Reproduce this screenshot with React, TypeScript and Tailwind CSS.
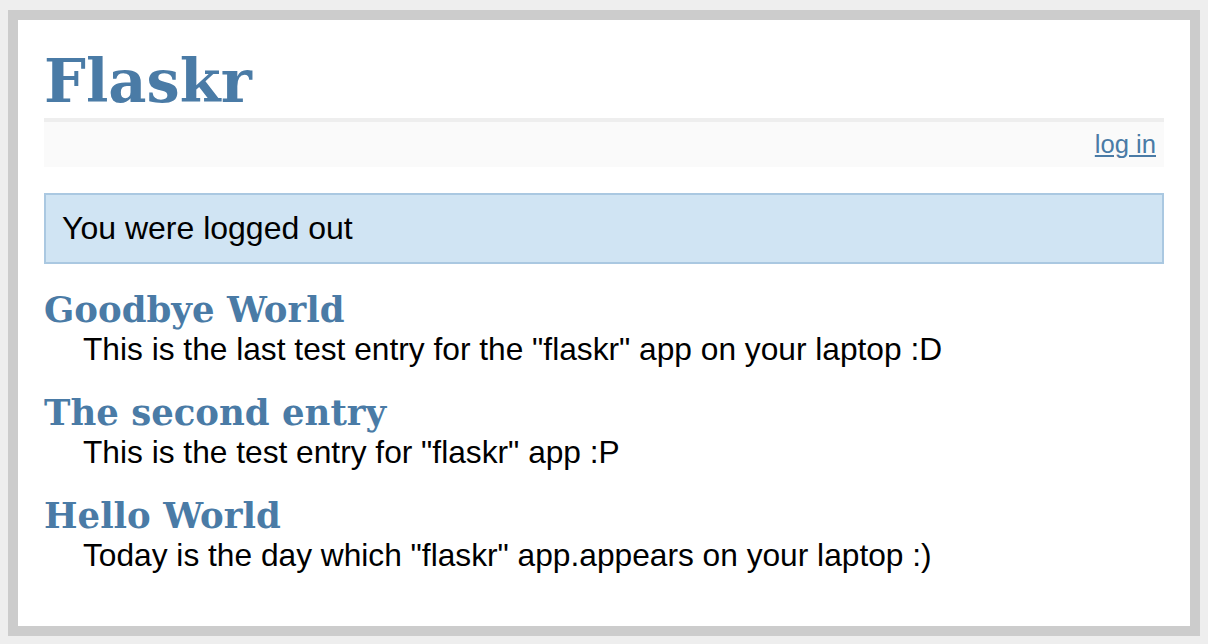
import React from "react";

const entries = [
  { title: "Goodbye World", text: 'This is the last test entry for the "flaskr" app on your laptop :D' },
  { title: "The second entry", text: 'This is the test entry for "flaskr" app :P' },
  { title: "Hello World", text: 'Today is the day which "flaskr" app.appears on your laptop :)' },
];

export default function App() {
  return (
    <div className="w-[1208px] h-[644px] bg-[#eeeeee] pt-[10px] px-[8px] pb-[8px] font-['Liberation_Sans',Arial,sans-serif]">
      <div className="h-[626px] border-[10px] border-[#cccccc] bg-white px-[26px] pt-[26px]">
        <h1 className="m-0 font-['DejaVu_Serif',Georgia,serif] font-bold text-[59px] leading-[72px] text-[#4a7ba6] border-b-[4px] border-[#eeeeee]">
          Flaskr
        </h1>
        <div className="bg-[#fafafa] text-right text-[25.6px] leading-[29px] px-[8px] py-[8px] mb-[26px]">
          <a href="#" className="text-[#4a7ba6] underline">log in</a>
        </div>
        <div className="bg-[#d0e4f3] border-[2px] border-[#aac8e1] px-[16px] py-[16px] text-[32px] leading-[35px] text-black">
          You were logged out
        </div>
        <ul className="m-0 p-0 list-none">
          {entries.map((e) => (
            <li key={e.title} className="mt-[25px] mr-[40px] ml-[39px]">
              <h2 className="-ml-[39px] m-0 font-['DejaVu_Serif',Georgia,serif] font-bold text-[35.5px] leading-[42px] text-[#4a7ba6]">
                {e.title}
              </h2>
              <div className="text-[31.7px] leading-[36px] text-black">{e.text}</div>
            </li>
          ))}
        </ul>
      </div>
    </div>
  );
}
